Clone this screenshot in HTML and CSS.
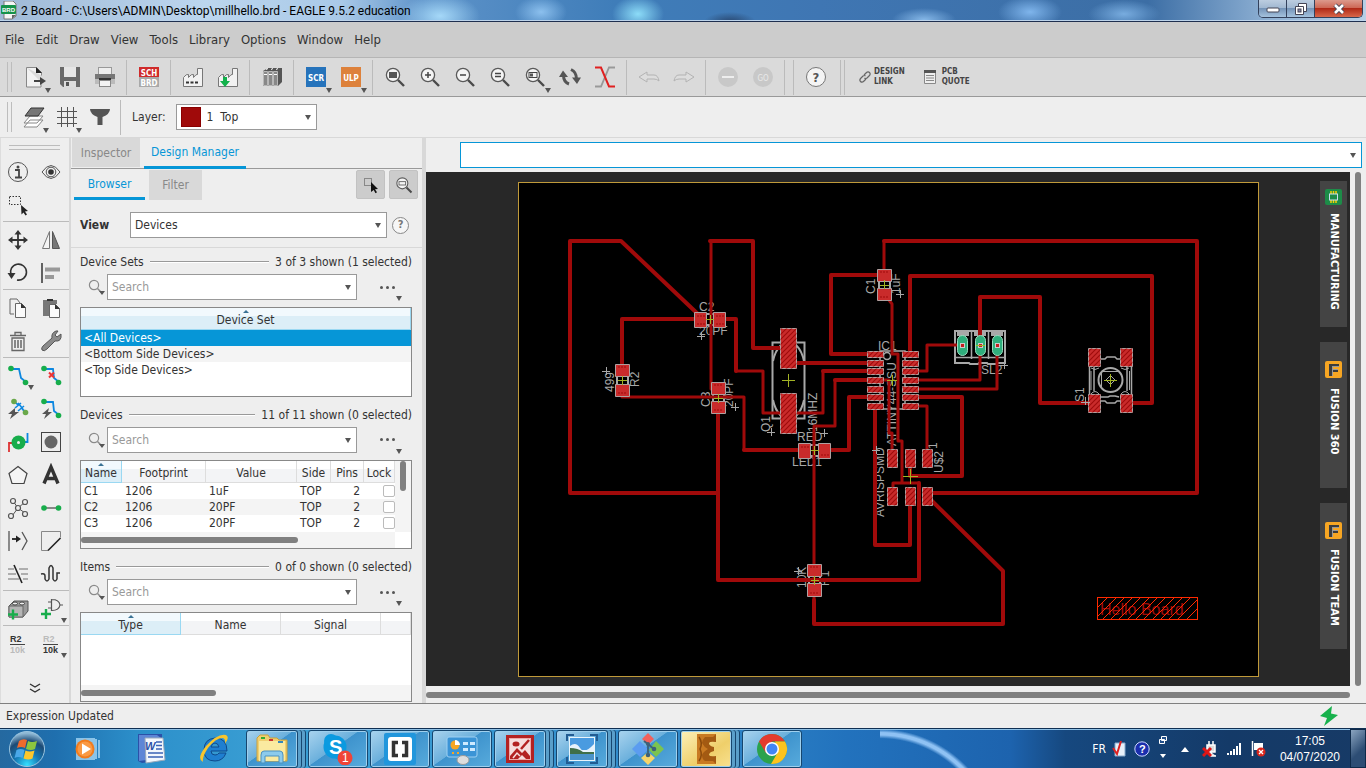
FILE: index.html
```html
<!DOCTYPE html>
<html lang="en">
<head>
<meta charset="utf-8">
<title>2 Board - EAGLE 9.5.2 education</title>
<link rel="stylesheet" href="styles.css">
</head>
<body>
<svg class="defs" aria-hidden="true">
  <defs>
    <symbol id="lens" viewBox="0 0 24 24"><circle cx="10" cy="10" r="6.6" fill="#f4f4f4" stroke="#5a5a5a" stroke-width="1.3"/><path d="M15 15l6 6" stroke="#4a4a4a" stroke-width="2.4"/></symbol>
    <symbol id="find" viewBox="0 0 16 16"><circle cx="6" cy="6" r="4.6" fill="none" stroke="#8a8a8a" stroke-width="1.2"/><path d="M9.5 9.5l5 5" stroke="#8a8a8a" stroke-width="1.5"/></symbol>
    <symbol id="factory" viewBox="0 0 24 24"><path d="M2.500 21.500V12.500q3-4 5-3v3q3-4 5-3v3q3-4 4-3V3.500h5v18z" fill="#f2f2f2" stroke="#777"/></symbol>
    <symbol id="fusion" viewBox="0 0 17 17"><rect width="17" height="17" rx="2" fill="#f7a623"/><path d="M4 3h10v3H8v2h5v3H8v4H4z" fill="#3c3c3c"/><path d="M7 5h7v1H8v2h5v1H8v6H7z" fill="#999"/></symbol>
  </defs>
</svg>

<div class="window">
<header class="titlebar">
  <svg class="app-icon" width="16" height="19" viewBox="0 0 16 19"><path d="M3 0h9l3 3v12l-4 3H3z" fill="#f4f4f4" stroke="#777"/><path d="M11 18v-4h4z" fill="#666"/><rect x="0" y="4" width="15" height="9" rx="1" fill="#16924a"/><text x="1" y="11" class="brd-mini">BRD</text></svg>
  <h1>2 Board - C:\Users\ADMIN\Desktop\millhello.brd - EAGLE 9.5.2 education</h1>
  <div class="winbtns">
    <button class="wb" aria-label="Minimize"><svg width="14" height="8" viewBox="0 0 14 8"><rect x="1" y="3" width="12" height="4" rx="1" fill="#fff" stroke="#445"/></svg></button>
    <button class="wb" aria-label="Restore"><svg width="14" height="14" viewBox="0 0 14 14"><path d="M4.500 1.500h8v8h-8z" fill="#fff" stroke="#445"/><path d="M1.500 4.500h8v8h-8z" fill="#fff" stroke="#445"/><rect x="4" y="7" width="3" height="3" fill="#88a" stroke="#445"/></svg></button>
    <button class="wb close" aria-label="Close"><svg width="14" height="12" viewBox="0 0 14 12"><path d="M3 2l8 8M11 2l-8 8" stroke="#445" stroke-width="4.500"/><path d="M3 2l8 8M11 2l-8 8" stroke="#fff" stroke-width="2.600"/></svg></button>
  </div>
</header>

<nav class="menubar">
  <button>File</button><button>Edit</button><button>Draw</button><button>View</button><button>Tools</button><button>Library</button><button>Options</button><button>Window</button><button>Help</button>
</nav>

<div class="toolbar main-tools">
  <span class="grip"></span>
  <button class="tool dd" aria-label="Open"><svg viewBox="0 0 24 24"><path d="M3.500 2.500h10l5 5v3M18 17v5H3.500V2.500" fill="#f2f2f2" stroke="#888"/><path d="M13 2l6 6h-6z" fill="#222"/><path d="M11 16h7" stroke="#444" stroke-width="2"/><path d="M17 12l6 4-6 4z" fill="#444"/></svg></button>
  <button class="tool" aria-label="Save"><svg viewBox="0 0 24 24"><path d="M2 2h20v20H5l-3-3z" fill="#696969"/><rect x="6" y="2" width="12" height="10" fill="#e6e6e6"/><rect x="6" y="16" width="12" height="6" fill="#ddd"/><rect x="8" y="17" width="3" height="4" fill="#555"/></svg></button>
  <button class="tool" aria-label="Print"><svg viewBox="0 0 24 24"><rect x="5.500" y="2.500" width="13" height="7" fill="#eee" stroke="#999"/><rect x="2" y="9" width="20" height="5" fill="#777"/><rect x="2" y="14" width="20" height="5" fill="#bbb"/><rect x="6" y="13" width="12" height="2" fill="#333"/><rect x="6.500" y="15.500" width="11" height="6" fill="#f2f2f2" stroke="#888"/></svg></button>
  <span class="sep"></span>
  <button class="tool" aria-label="Schematic"><svg viewBox="0 0 24 24"><rect x="2" y="2" width="20" height="10" fill="#cf2a2a"/><rect x="2" y="12" width="20" height="10" fill="#a9a9a9"/><text x="12" y="10.500" class="tag">SCH</text><text x="12" y="20.500" class="tag">BRD</text></svg></button>
  <span class="sep"></span>
  <button class="tool" aria-label="Manufacturing"><svg viewBox="0 0 24 24"><use href="#factory"/><path d="M5 17.500h12" stroke="#333" stroke-width="2" stroke-dasharray="3 1.500"/></svg></button>
  <button class="tool" aria-label="Generate CAM data"><svg viewBox="0 0 24 24"><use href="#factory"/><path d="M7 12h4v4h3l-5 6-5-6h3z" fill="#12b14b"/></svg></button>
  <span class="sep"></span>
  <button class="tool" aria-label="Library manager"><svg viewBox="0 0 24 24"><path d="M3 6l5-3h14v14l-4 4H3z" fill="#555"/><path d="M3.500 6.500h4v14h-4zM8.500 6.500h4v14h-4zM13.500 6.500h4v14h-4z" fill="#888" stroke="#ccc" stroke-width=".8"/><path d="M4 9.500h3M9 9.500h3M14 9.500h3M6 4.500l2-1M11 4.500l2-1M16 4.500l2-1" stroke="#fff"/></svg></button>
  <span class="sep"></span>
  <button class="tool dd" aria-label="Run script"><svg viewBox="0 0 24 24"><rect x="2" y="2" width="20" height="20" fill="#2673bb"/><text x="12" y="15.500" class="tag">SCR</text></svg></button>
  <button class="tool dd" aria-label="Run ULP"><svg viewBox="0 0 24 24"><rect x="2" y="2" width="20" height="20" fill="#dd813b"/><text x="12" y="15.500" class="tag">ULP</text></svg></button>
  <span class="sep"></span>
  <button class="tool" aria-label="Zoom to fit"><svg viewBox="0 0 24 24"><use href="#lens"/><rect x="6" y="7" width="8" height="6" fill="#555"/></svg></button>
  <button class="tool" aria-label="Zoom in"><svg viewBox="0 0 24 24"><use href="#lens"/><path d="M7 10h6M10 7v6" stroke="#444" stroke-width="1.500"/></svg></button>
  <button class="tool" aria-label="Zoom out"><svg viewBox="0 0 24 24"><use href="#lens"/><path d="M7 10h6" stroke="#444" stroke-width="1.500"/></svg></button>
  <button class="tool" aria-label="Redraw"><svg viewBox="0 0 24 24"><use href="#lens"/><path d="M7 8.500h6M7 11.500h6" stroke="#444" stroke-width="1.300"/></svg></button>
  <button class="tool dd" aria-label="Zoom select"><svg viewBox="0 0 24 24"><use href="#lens"/><rect x="6" y="7.500" width="8" height="5" fill="none" stroke="#444"/><rect x="7" y="8.500" width="3" height="3" fill="#555"/></svg></button>
  <button class="tool" aria-label="Refresh"><svg viewBox="0 0 24 24"><path d="M5.500 10q0 7 5.500 9M18.500 14q0-7-5.500-9.500" fill="none" stroke="#555" stroke-width="3"/><path d="M1 12l4-6.500 5 6.500zM14 12.500h9l-4 6.500z" fill="#555"/></svg></button>
  <button class="tool" aria-label="Stop routing"><svg viewBox="0 0 24 24"><path d="M2 21.500h6l8-19h6" fill="none" stroke="#999" stroke-width="1.800"/><path d="M2 2.500h6l8 19h6" fill="none" stroke="#e02020" stroke-width="2"/></svg></button>
  <span class="sep"></span>
  <button class="tool" aria-label="Undo" disabled><svg viewBox="0 0 24 24"><path d="M2 12l8-5v3h7q4 0 5 6-2-2-5-2h-7v3z" fill="#ddd" stroke="#b3b3b3"/></svg></button>
  <button class="tool" aria-label="Redo" disabled><svg viewBox="0 0 24 24"><path d="M22 12l-8-5v3H7q-4 0-5 6 2-2 5-2h7v3z" fill="#ddd" stroke="#b3b3b3"/></svg></button>
  <span class="sep"></span>
  <button class="tool" aria-label="Stop" disabled><svg viewBox="0 0 24 24"><circle cx="12" cy="12" r="10" fill="#c8c8c8"/><path d="M6 12h12" stroke="#eee" stroke-width="2"/></svg></button>
  <button class="tool" aria-label="Go" disabled><svg viewBox="0 0 24 24"><circle cx="12" cy="12" r="10" fill="#c8c8c8"/><text x="12" y="15.500" class="tag dim">GO</text></svg></button>
  <span class="sep"></span><span class="sep"></span>
  <button class="tool" aria-label="Help"><svg viewBox="0 0 24 24"><circle cx="12" cy="12" r="9.500" fill="#f4f4f4" stroke="#777"/><text x="8.500" y="17" class="qm">?</text></svg></button>
  <span class="sep double"></span>
  <button class="link-tool"><svg width="12" height="14" viewBox="0 0 12 14"><path d="M5 5L7 3Q9 1 10.500 2.500T10 6L8 8Q6.500 9 5.500 8M7 9l-2 2q-2 2-3.500.500T2 8l2-2q1.500-1 2.500 0" fill="none" stroke="#666" stroke-width="1.200"/></svg><span>DESIGN<br>LINK</span></button>
  <button class="link-tool quote"><svg width="12" height="14" viewBox="0 0 12 14"><rect width="12" height="3" y="0" fill="#555"/><path d="M.5 3v10.500h11V3" fill="#eee" stroke="#888"/><path d="M2 5.500h8M2 8h8M2 10.500h8" stroke="#888"/></svg><span>PCB<br>QUOTE</span></button>
</div>

<div class="toolbar option-tools">
  <span class="grip"></span>
  <button class="tool dd" aria-label="Layers"><svg viewBox="0 0 24 24"><path d="M8 15h13l-6 7H2zM8 11h13l-6 7H2z" fill="#fff" stroke="#888"/><path d="M9 3h13l-6 8H3z" fill="#777" stroke="#333"/></svg></button>
  <button class="tool dd" aria-label="Grid"><svg viewBox="0 0 24 24"><path d="M6.500 2v20M12.500 2v20M18.500 2v20M2 6.500h20M2 12.500h20M2 18.500h20" stroke="#555"/></svg></button>
  <button class="tool" aria-label="Filter"><svg viewBox="0 0 24 24"><path d="M2 4h20q0 5-7.500 8v8h-5v-8Q2 9 2 4z" fill="#555"/></svg></button>
  <span class="sep"></span>
  <label for="layer">Layer:</label>
  <span class="combo layer"><i class="swatch"></i><select id="layer"><option>1&nbsp; Top</option></select></span>
</div>

<main class="work">
  <aside class="palette">
    <span class="hgrip"></span>
    <div class="pgrid">
      <button aria-label="Info"><svg viewBox="0 0 24 24"><circle cx="12" cy="12" r="9.500" fill="none" stroke="#555"/><path d="M9 10h4v7M9 17.500h7" fill="none" stroke="#444" stroke-width="1.800"/><circle cx="12" cy="7" r="1.500" fill="#444"/></svg></button>
      <button aria-label="Show"><svg viewBox="0 0 24 24"><path d="M3 12q9-13 18 0-9 13-18 0z" fill="none" stroke="#555"/><circle cx="12" cy="12" r="4.800" fill="none" stroke="#555"/><circle cx="12" cy="12" r="2.800" fill="#333"/></svg></button>
      <button aria-label="Group"><svg viewBox="0 0 24 24"><rect x="3.500" y="3.500" width="11" height="8" fill="none" stroke="#333" stroke-dasharray="1.500 1.500"/><path d="M15 12l7 6-3 .5 2 3-1.500 1-2-3-2 2z" fill="#222"/></svg></button>
    </div>
    <hr>
    <div class="pgrid">
      <button aria-label="Move"><svg viewBox="0 0 24 24"><path d="M5 12h14M12 5v14" stroke="#333" stroke-width="1.800"/><path d="M12 2l3.500 4.500h-7zM12 22l3.500-4.500h-7zM2 12l4.500-3.500v7zM22 12l-4.500-3.500v7z" fill="#333"/></svg></button>
      <button aria-label="Mirror"><svg viewBox="0 0 24 24"><path d="M10.500 3.500v17h-7z" fill="#f4f4f4" stroke="#777"/><path d="M13.500 3.500v17h7z" fill="#777" stroke="#555"/></svg></button>
      <button aria-label="Rotate"><svg viewBox="0 0 24 24"><path d="M5 14a8 8 0 1 1 6 5" fill="none" stroke="#333" stroke-width="1.600"/><path d="M1.500 12l8 0-4 6z" fill="#333"/></svg></button>
      <button aria-label="Align"><svg viewBox="0 0 24 24"><path d="M3 2v20" stroke="#333" stroke-width="1.500"/><path d="M6 8.500h15M6 16h9" stroke="#999" stroke-width="4"/></svg></button>
    </div>
    <hr>
    <div class="pgrid">
      <button aria-label="Copy"><svg viewBox="0 0 24 24"><path d="M4 3h7l3 4M4 3v15h4" fill="none" stroke="#666"/><path d="M9.500 7.500h6l4 4v10h-10z" fill="#fafafa" stroke="#666"/><path d="M15 7v5h5z" fill="#333"/></svg></button>
      <button aria-label="Paste"><svg viewBox="0 0 24 24"><path d="M4 4h14v4h-7v12H4z" fill="#777"/><path d="M8 3h6v2H8z" fill="#333"/><path d="M10.500 8.500h6l4 4v9h-10z" fill="#fafafa" stroke="#666"/><path d="M16 8v5h5z" fill="#333"/></svg></button>
      <button aria-label="Delete"><svg viewBox="0 0 24 24"><path d="M4 6.500h16M9 6V3.500h6V6M6 9v12.500h12V9z" fill="none" stroke="#666" stroke-width="1.300"/><path d="M9 11v8M12 11v8M15 11v8" stroke="#666" stroke-width="1.500"/></svg></button>
      <button aria-label="Change"><svg viewBox="0 0 24 24"><path d="M3 21q-1-2 1-4l9-8q-1-5 4-7l2 0-3 4 2 2 4-3q1 8-6 7l-8 8q-3 3-5 1z" fill="#8b8b8b" stroke="#555"/></svg></button>
    </div>
    <hr>
    <div class="pgrid">
      <button class="dd" aria-label="Route"><svg viewBox="0 0 24 24"><path d="M5 5h8l2 9 5 4" fill="none" stroke="#0c87e0" stroke-width="1.800"/><circle cx="5" cy="4.500" r="2.800" fill="#17ad4b"/><circle cx="19.500" cy="18.500" r="2.800" fill="#17ad4b"/></svg></button>
      <button aria-label="Ripup"><svg viewBox="0 0 24 24"><path d="M5 5h9l1 9 5 4" fill="none" stroke="#0c87e0" stroke-width="1.800"/><circle cx="5" cy="4.500" r="2.800" fill="#17ad4b"/><circle cx="19.500" cy="18.500" r="2.800" fill="#17ad4b"/><path d="M10 8.500l5 5M15 8.500l-5 5" stroke="#e33" stroke-width="2"/></svg></button>
      <button aria-label="Autoroute pair"><svg viewBox="0 0 24 24"><path d="M8 4l4 4M16 12l4 3M9 11l6-5M12 14l6-5M12 6l5 6" stroke="#0c87e0" stroke-width="1.600"/><circle cx="8" cy="4.500" r="2.800" fill="#6aa84a"/><circle cx="19.500" cy="15.500" r="2.800" fill="#6aa84a"/><path d="M9 11l-7 6h4l-2 5 9-7H9z" fill="#555"/></svg></button>
      <button aria-label="Autoroute"><svg viewBox="0 0 24 24"><path d="M5 5h9l1 9 5 4" fill="none" stroke="#0c87e0" stroke-width="1.800"/><circle cx="5" cy="4.500" r="2.800" fill="#17ad4b"/><circle cx="19.500" cy="18.500" r="2.800" fill="#17ad4b"/><path d="M10 11l-7 6h4l-2 5 8-7H9z" fill="#555"/></svg></button>
      <button aria-label="Via"><svg viewBox="0 0 24 24"><path d="M3 22v-9h5" fill="none" stroke="#d33" stroke-width="1.800"/><path d="M21.500 3v9H16" fill="none" stroke="#0c87e0" stroke-width="1.800"/><circle cx="12.500" cy="12.500" r="7" fill="#17ad4b"/><circle cx="12.500" cy="12.500" r="1.500" fill="#eee"/></svg></button>
      <button aria-label="Hole"><svg viewBox="0 0 24 24"><rect x="2.500" y="2.500" width="19" height="19" fill="none" stroke="#444"/><circle cx="12" cy="12" r="6.500" fill="#666"/></svg></button>
      <button aria-label="Polygon"><svg viewBox="0 0 24 24"><path d="M12 3.500l9 7-3 10H6l-3-10z" fill="#f4f4f4" stroke="#444" stroke-width="1.200"/></svg></button>
      <button aria-label="Text"><svg viewBox="0 0 24 24"><path d="M5 20.500L12 4l7 16.500M7.500 15.500h9" fill="none" stroke="#333" stroke-width="3.400"/></svg></button>
      <button aria-label="Ratsnest"><svg viewBox="0 0 24 24"><path d="M7 5l5 7 7-6M12 12l-6 8M12 12l7 5" fill="none" stroke="#555"/><g fill="#eee" stroke="#555" stroke-width="1.200"><circle cx="7" cy="5" r="2.500"/><circle cx="19" cy="6" r="2.500"/><circle cx="5" cy="20" r="2.500"/><circle cx="19" cy="18" r="2.500"/><circle cx="12" cy="12" r="2.500"/></g></svg></button>
      <button aria-label="Signal"><svg viewBox="0 0 24 24"><path d="M5 12h14" stroke="#888" stroke-width="2"/><circle cx="5" cy="12" r="2.800" fill="#17ad4b"/><circle cx="19.500" cy="12" r="2.800" fill="#17ad4b"/></svg></button>
      <button aria-label="Slice"><svg viewBox="0 0 24 24"><path d="M3 2v20M16 3l5 9-5 9" fill="none" stroke="#555" stroke-width="1.300"/><path d="M6 10h5" stroke="#222" stroke-width="1.800"/><path d="M10 6.500l5 3.500-5 3.500z" fill="#222"/></svg></button>
      <button aria-label="Miter"><svg viewBox="0 0 24 24"><path d="M2.500 21.500v-19h19v6M9 21.500H2.500" fill="none" stroke="#888"/><path d="M9 21.500L21.500 9" stroke="#222" stroke-width="1.600"/></svg></button>
      <button aria-label="Split"><svg viewBox="0 0 24 24"><path d="M2 7h6M13 7h9M2 12h8M15 12h7M2 17h11M17 17h5" fill="none" stroke="#999" stroke-width="1.400"/><path d="M8 3l8 18" stroke="#222" stroke-width="1.600"/></svg></button>
      <button aria-label="Meander"><svg viewBox="0 0 24 24"><path d="M2 12q4-1 4 2v3q2 4 4 0V6q2-5 4 0v11q2 4 4 0v-6h3" fill="none" stroke="#333" stroke-width="1.500"/></svg></button>
    </div>
    <hr>
    <div class="pgrid">
      <button aria-label="Add part"><svg viewBox="0 0 24 24"><path d="M3 9l5-5h14v10l-5 6H3z" fill="#999" stroke="#555"/><path d="M3 9h14v11H3z" fill="#b5b5b5" stroke="#666"/><g fill="#eee" stroke="#444"><ellipse cx="9" cy="6.500" rx="2.500" ry="1.500"/><ellipse cx="16" cy="6.500" rx="2.500" ry="1.500"/></g><path d="M2 17.500h10M7 12.500v10" stroke="#17ad4b" stroke-width="2.400"/></svg></button>
      <button class="dd" aria-label="Replace"><svg viewBox="0 0 24 24"><path d="M12.500 2v12M13 2.500q7 0 8 5.500-1 5.500-8 5.500M9 5h4M9 11h4M21 8h3" fill="none" stroke="#555" stroke-width="1.200"/><path d="M2 17h10M7 12v10" stroke="#17ad4b" stroke-width="2.400"/></svg></button>
    </div>
    <hr>
    <div class="pgrid">
      <button aria-label="Name"><svg viewBox="0 0 24 24"><text x="4" y="10" class="rv">R2</text><path d="M4 12.500h15" stroke="#444"/><text x="4" y="21" class="rv dim2">10k</text></svg></button>
      <button class="dd" aria-label="Value"><svg viewBox="0 0 24 24"><text x="4" y="10" class="rv dim2">R2</text><path d="M4 12.500h15" stroke="#444"/><text x="4" y="21" class="rv">10k</text></svg></button>
    </div>
    <button class="more" aria-label="More"><svg width="12" height="12" viewBox="0 0 12 12"><path d="M1 2l5 3 5-3M1 7l5 3 5-3" fill="none" stroke="#333" stroke-width="1.400"/></svg></button>
  </aside>

  <section class="panel">
    <div class="tabs"><button class="tab">Inspector</button><button class="tab on">Design Manager</button></div>
    <div class="subtabs">
      <button class="tab on">Browser</button><button class="tab">Filter</button>
      <span class="grow"></span>
      <button class="sq" aria-label="Select in board"><svg width="20" height="20" viewBox="0 0 20 20"><rect x="3.500" y="3.500" width="7" height="7" fill="#ccc" stroke="#888"/><path d="M10 7l7 7-3 .3 2 3-1.500 1-1.800-3.300-2.700 2z" fill="#111"/></svg></button>
      <button class="sq" aria-label="Zoom to selection"><svg width="20" height="20" viewBox="0 0 24 24"><use href="#lens"/><rect x="6" y="8" width="8" height="4" fill="none" stroke="#555"/></svg></button>
    </div>
    <div class="viewrow">
      <label for="view">View</label>
      <span class="combo"><select id="view"><option>Devices</option></select></span>
      <button class="help" aria-label="View help">?</button>
    </div>

    <div class="groups">
      <section class="group">
        <div class="ghead"><h2>Device Sets</h2><span class="rule"></span><span>3 of 3 shown (1 selected)</span></div>
        <div class="search"><button class="dd" aria-label="Search options"><svg width="16" height="16"><use href="#find"/></svg></button><span class="combo"><input aria-label="Search device sets" placeholder="Search"></span><button class="dots dd" aria-label="More options"><i></i><i></i><i></i></button></div>
        <div class="box">
          <table class="list sets"><thead><tr><th class="sorted">Device Set</th></tr></thead>
          <tbody><tr class="sel"><td>&lt;All Devices&gt;</td></tr><tr><td>&lt;Bottom Side Devices&gt;</td></tr><tr><td>&lt;Top Side Devices&gt;</td></tr></tbody></table>
        </div>
      </section>
      <section class="group">
        <div class="ghead"><h2>Devices</h2><span class="rule"></span><span>11 of 11 shown (0 selected)</span></div>
        <div class="search"><button class="dd" aria-label="Search options"><svg width="16" height="16"><use href="#find"/></svg></button><span class="combo"><input aria-label="Search devices" placeholder="Search"></span><button class="dots dd" aria-label="More options"><i></i><i></i><i></i></button></div>
        <div class="box">
          <div class="scrollrow">
            <table class="list devs">
              <colgroup><col class="c41"><col class="c84"><col class="c90"><col class="c34"><col class="c33"><col></colgroup>
              <thead><tr><th class="sorted">Name</th><th>Footprint</th><th>Value</th><th>Side</th><th>Pins</th><th>Lock</th></tr></thead>
              <tbody>
                <tr><td>C1</td><td>1206</td><td>1uF</td><td>TOP</td><td class="num">2</td><td class="num"><input type="checkbox" aria-label="Lock C1"></td></tr>
                <tr><td>C2</td><td>1206</td><td>20PF</td><td>TOP</td><td class="num">2</td><td class="num"><input type="checkbox" aria-label="Lock C2"></td></tr>
                <tr><td>C3</td><td>1206</td><td>20PF</td><td>TOP</td><td class="num">2</td><td class="num"><input type="checkbox" aria-label="Lock C3"></td></tr>
              </tbody></table>
            <div class="vbar"><i></i></div>
          </div>
          <div class="hbar wide"><i></i></div>
        </div>
      </section>
      <section class="group">
        <div class="ghead"><h2>Items</h2><span class="rule"></span><span>0 of 0 shown (0 selected)</span></div>
        <div class="search"><button class="dd" aria-label="Search options"><svg width="16" height="16"><use href="#find"/></svg></button><span class="combo"><input aria-label="Search items" placeholder="Search"></span><button class="dots dd" aria-label="More options"><i></i><i></i><i></i></button></div>
        <div class="box">
          <div class="scrollrow">
          <table class="list items"><colgroup><col class="c100"><col class="c100"><col class="c100"><col></colgroup><thead><tr><th class="sorted">Type</th><th>Name</th><th>Signal</th><th></th></tr></thead></table>
          </div>
          <div class="hbar"><i></i></div>
        </div>
      </section>
    </div>
  </section>

  <section class="editor">
    <div class="cmd"><span class="combo"><input aria-label="Command line"></span></div>
    <div class="stage">
      <div class="canvas">
        <svg class="board" viewBox="426 172 924 514" preserveAspectRatio="xMidYMid meet">
          <defs>
            <pattern id="hatch" width="5" height="5" patternUnits="userSpaceOnUse"><path d="M-1 6L6 -1M-1 1L1 -1M4 6L6 4" stroke="#9f0a0a" stroke-width="1.200"/></pattern>
          </defs>
          <rect x="518.500" y="182.500" width="740" height="494" fill="#000" stroke="#c09a3a"/>
          <g class="silk">
            <text x="699" y="311">C2</text><text x="699" y="335">20PF</text>
            <text transform="translate(614 392) rotate(-90)">499</text><text transform="translate(639 387) rotate(-90)">R2</text>
            <text transform="translate(710 407) rotate(-90)">C3</text><text transform="translate(733 407) rotate(-90)">20PF</text>
            <text transform="translate(875 294) rotate(-90)">C1</text><text transform="translate(900 294) rotate(-90)">1uF</text>
            <text transform="translate(770 432) rotate(-90)">Q1</text><text transform="translate(817 432) rotate(-90)">16MHZ</text>
            <text x="797" y="441">RED</text><text x="792" y="466">LED1</text>
            <text x="878" y="350">IC1</text><text transform="translate(896 446) rotate(-90)">ATTINY44-SSU</text>
            <text transform="translate(884 517) rotate(-90)">AVRISPSMD</text><text transform="translate(943 473) rotate(-90)">U$2</text><text transform="translate(937 449) rotate(-90)">1</text>
            <text x="981" y="374">SL2</text><text transform="translate(1084 402) rotate(-90)">S1</text>
            <text transform="translate(806 588) rotate(-90)">10K</text><text transform="translate(829 586) rotate(-90)">R1</text>
          </g>
          <!-- package outlines -->
          <g fill="none" stroke="#a8a8a8" stroke-width="2">
            <rect x="772.500" y="342.500" width="32" height="76"/>
            <path d="M773 361q2-10 8-16M804 361q-2-10-8-16M773 400q2 10 8 16M804 400q-2 10-8 16"/>
            <rect x="880" y="351" width="25" height="58" stroke-width="1.500"/>
            <circle cx="887" cy="356" r="3.500" stroke-width="1.500"/>
            <path d="M955 331h50v32h-8l-1 1h-8l-1-1h-8l-1 1h-8l-1-1h-14z"/>
            <path d="M956 357.500h48M971.500 331v28M988.500 331v28" stroke-width="1.500"/>
            <path d="M957 334h12M974 334h12M991 334h12" stroke-width="4"/>
            <path d="M1089.500 366v30M1131.500 366v30M1094 367v24M1127 367v24M1100 359h5l2-2h8l2 2h4M1100 397h8l2-1h5l4 1M1100 401h5l2 2h8l2-2h4" stroke-width="1.500"/>
            <path d="M1091 371v19M1129.500 371v19M1091 368q4 3 8 0M1121 368q4 3 8 0M1091 394q4-5 8 0M1121 394q4-5 8 0" stroke-width="1"/>
            <circle cx="1110.500" cy="380" r="12"/>
            <path d="M1101 371.500h19M1101.500 372v16M1106 380l4.500-4.500 4.500 4.500-4.500 4.500z" stroke-width="1"/>
            <path d="M617 377v7M628 377v7M713 395v6M724 395v6M707 314h6M707 325h6M879 282v6M890 282v6M811 445h7M811 456h7M809 577v6M820 577v6"/>
          </g>
          <!-- copper traces -->
          <g class="trace">
            <path d="M700 316L621 241H570V493H718M700 319H622V368M710 241H753V348H785M722 319H736V371M718 412V580H919V483M824 450H849V397H870M884 241H1197V493H930M878 275H831V354H870M910 354V276H1152V403H1127M980 345V297H1040V403H1093M918 397H962V476H910V460M875 409V545H910V497M800 450H744M814 600V624H1003V571L928 497M797 363H870M823 371H870M835 380H870"/>
          </g>
          <g class="trace thin">
            <path d="M711 389V241M736 371H763V413M622 397H744V450M763 413H823V371M835 380V426H814V600M884 270V241M889 300L892 304V354H898V441H902V483M918 371H927V345H962M918 380H980V345M918 389H997V345M918 406H927V460M870 380H889V433H892V455M893 490V483H919"/>
          </g>
          <g class="pads">
            <g id="p">
              <path d="M694.500 312.500h12v15h-12zM713.500 312.500h12v15h-12zM615.500 364.500h14v12h-14zM615.500 384.500h14v12h-14zM711.500 382.500h14v12h-14zM711.500 401.500h14v12h-14zM877.500 269.500h14v12h-14zM877.500 288.500h14v12h-14zM798.500 443.500h12v15h-12zM818.500 443.500h12v15h-12zM807.500 564.500h14v12h-14zM807.500 583.500h14v13h-14z"/>
            </g>
            <g id="q">
              <path d="M780.500 328.500h16v40h-16zM780.500 393.500h16v40h-16zM1088.500 348.500h12v18h-12zM1120.500 348.500h12v18h-12zM1088.500 394.500h12v18h-12zM1120.500 394.500h12v18h-12zM887.500 449.500h10v18h-10zM905.500 449.500h10v18h-10zM922.500 449.500h10v18h-10zM887.500 487.500h10v18h-10zM905.500 487.500h10v18h-10zM922.500 487.500h10v18h-10z"/>
              <path d="M867.500 351.500h16v6h-16zM867.500 360.500h16v6h-16zM867.500 368.500h16v6h-16zM867.500 377.500h16v6h-16zM867.500 386.500h16v6h-16zM867.500 394.500h16v6h-16zM867.500 403.500h16v6h-16zM902.500 351.500h16v6h-16zM902.500 360.500h16v6h-16zM902.500 368.500h16v6h-16zM902.500 377.500h16v6h-16zM902.500 386.500h16v6h-16zM902.500 394.500h16v6h-16zM902.500 403.500h16v6h-16z"/>
            </g>
          </g>
          <use href="#q" class="pad-hatch"/>
          <path d="M697 316h8M697 324h8M716 316h8M716 324h8M618 367h9M618 393h9M714 385h9M714 410h9M880 272h9M880 297h9M801 447h8M821 455h8M810 567h9M810 593h9" stroke="#9f0a0a" stroke-dasharray="2 1"/>
          <g fill="#2fae7c" stroke="#9adcc0"><rect x="957.500" y="335.500" width="10" height="20" rx="5"/><rect x="975.500" y="335.500" width="10" height="20" rx="5"/><rect x="992.500" y="335.500" width="10" height="20" rx="5"/></g>
          <g fill="#c41d1d" stroke="#ccc"><rect x="960.500" y="343.500" width="4" height="4"/><rect x="978.500" y="343.500" width="4" height="4"/><rect x="995.500" y="343.500" width="4" height="4"/></g>
          <!-- origin crosses -->
          <path d="M782 380.500h13M788.500 374v13M706 319.500h8M710.500 315v9M618 380.500h9M622.500 376v9M714 398.500h9M718.500 394v9M880 285.500h9M884.500 280v9M811 450.500h8M814.500 446v9M811 580.500h8M814.500 576v9M887 380.500h10M892.500 375v11M903 476.500h15M910.500 469v15M1104 380.500h13M1110.500 374v13M976 345.500h9" stroke="#a3b425" fill="none"/>
          <path d="M697 336.500h8M701.500 332v8M602 371.500h8M606.500 367v8M731 407.500h8M735.500 403v8M896 294.500h8M900.500 290v8M767 432.500h8M771.500 428v8M820 433.500h8M824.500 429v8M1000 365.500h8M1004.500 361v8M794 571.500h8M798.500 567v8M872 450.500h8M876.500 446v8M1081 402.500h9M1085.500 397v8" stroke="#a8a8a8" fill="none"/>
          <text x="1100" y="615" class="hello">Hello Board</text>
          <g fill="none" stroke="#ff2a00">
            <rect x="1097.500" y="597.500" width="100" height="22"/>
            <path d="M1098 607l9-9M1098 616l18-18M1103 619l21-21M1111 619l21-21M1119 619l21-21M1128 619l21-21M1136 619l21-21M1144 619l21-21M1153 619l21-21M1161 619l21-21M1169 619l21-21M1178 619l19-19M1187 619l10-10"/>
          </g>
        </svg>
        <nav class="sidetabs">
          <button><svg width="17" height="17" viewBox="0 0 17 17"><rect width="17" height="16" rx="2" fill="#1d8c48"/><path d="M6 2v12M8.500 2v12M11 2v12" stroke="#f5d000" stroke-width="1.500"/><rect x="4.500" y="5" width="8" height="6" fill="#1d8c48" stroke="#cde"/></svg><span>MANUFACTURING</span></button>
          <button><svg width="17" height="17"><use href="#fusion"/></svg><span>FUSION 360</span></button>
          <button><svg width="17" height="17"><use href="#fusion"/></svg><span>FUSION TEAM</span></button>
        </nav>
      </div>
      <div class="cscroll-v"><i></i></div>
      <div class="cscroll-h"><i></i></div>
    </div>
  </section>
</main>

<footer class="status"><span>Expression Updated</span><svg width="22" height="20" viewBox="0 0 22 20"><path d="M14 0L2 10l7 2-3 8L20 9l-7-1.500z" fill="#17b14c"/></svg></footer>
</div>

<nav class="taskbar">
  <button class="orb" aria-label="Start"><svg width="38" height="38" viewBox="0 0 38 38"><defs><radialGradient id="og" cx=".5" cy=".95" r=".9"><stop offset="0" stop-color="#35e0ff"/><stop offset=".4" stop-color="#1479b5"/><stop offset=".75" stop-color="#1c4a75"/><stop offset="1" stop-color="#8fb9d5"/></radialGradient></defs><circle cx="19" cy="19" r="17.500" fill="url(#og)" stroke="#9cc6e0"/><path d="M11 11q4-3 8-1l-2 8q-4-2-8 0z" fill="#ef6a2d"/><path d="M20 11q4 2 9 0l-2 8q-4 2-9 0z" fill="#8cc63f"/><path d="M8.500 20q4-2 8 0l-2 8q-4-2-8 0z" fill="#4aa8e8"/><path d="M17.500 20.500q4 2 9 0l-2 8q-4 2-9 0z" fill="#fcc72c"/></svg></button>
  <button class="pin" aria-label="Media Player"><svg width="28" height="28" viewBox="0 0 28 28"><path d="M2 3h19v22H2zM21 4h2v20h-2zM24 5h2v18h-2z" fill="#9ed0f0" opacity=".85"/><circle cx="11" cy="14" r="9.500" fill="#f17c1d"/><circle cx="11" cy="14" r="7.500" fill="#fa9a44"/><path d="M8 8.500l9 5.500-9 5.500z" fill="#fff"/></svg></button>
  <button class="pin" aria-label="Word"><svg width="32" height="32" viewBox="0 0 32 32"><path d="M3 1h24v26l-20 3-4-2z" fill="#2b51a8"/><path d="M4 2h18l4 3v20l-22 3z" fill="#5e86d6"/><path d="M10 5h18l2 22-19 3z" fill="#f3f7fd" stroke="#9ab"/><path d="M21 9h6M21 12.500h6M21 16h6M13 20h15M13 24h15" stroke="#3b63b5" stroke-width="1.500"/><text x="10" y="17" class="wordw">W</text></svg></button>
  <button class="pin" aria-label="Internet Explorer"><svg width="32" height="32" viewBox="0 0 32 32"><path d="M28 20q-3 8-11 8-11 0-11-11T17 5q12 0 12 13H13q0 4 4 4 3 0 4-2zM13 14h8q-1-4-4-4t-4 4z" fill="#1f7fd0" stroke="#0f4a8c"/><path d="M5 29Q-2 26 8 13 20 0 28 2q4 2-1 9 1-6-3-6-6 0-14 10-6 9-5 14z" fill="#f8c52e"/></svg></button>
  <button class="app stack"><svg width="32" height="32" viewBox="0 0 32 32" aria-label="Explorer"><path d="M1 5l3-3h8l2 3h7l2 2h8v21H1z" fill="#f0d070" stroke="#c9a03c"/><path d="M3 8h26v20H3z" fill="#faeaa0"/><path d="M5 4h4v2H5z" fill="#3a3"/><path d="M13 6h4v2h-4z" fill="#c33"/><path d="M22 8h5v2h-5z" fill="#38b"/><path d="M5 30v-8q0-4 3-4h16q3 0 3 4v8h-4v-7H9v7z" fill="#8ccbec" stroke="#4a91c0"/></svg></button>
  <button class="app"><svg width="32" height="32" viewBox="0 0 32 32" aria-label="Skype"><circle cx="13" cy="14" r="11.500" fill="#0b9ae0"/><circle cx="9" cy="8" r="7" fill="#0b9ae0"/><circle cx="18" cy="20" r="7" fill="#0b9ae0"/><text x="7" y="21" class="sk">S</text><circle cx="23" cy="25" r="7.500" fill="#f04438"/><text x="20" y="29" class="skn">1</text></svg></button>
  <button class="app"><svg width="32" height="32" viewBox="0 0 32 32" aria-label="Brackets"><rect width="32" height="32" rx="2" fill="#2196dc"/><rect x="4" y="4" width="24" height="24" rx="3" fill="#fff"/><path d="M14 9.500H9.500v13H14M18 9.500h4.500v13H18" fill="none" stroke="#333" stroke-width="3.500"/></svg></button>
  <button class="app"><svg width="32" height="32" viewBox="0 0 32 32" aria-label="Control Panel"><rect x="1" y="4" width="30" height="20" rx="2" fill="#3b94d6" stroke="#9fd0f2"/><circle cx="9" cy="12" r="4.500" fill="#f6a623"/><path d="M9 12V7a5 5 0 0 1 5 5z" fill="#fff"/><path d="M6 20h2M11 20h2" stroke="#f6a623" stroke-width="2"/><path d="M17 10.500h5M24 10.500h5M17 16.500h5M24 16.500h5" stroke="#cfeaff" stroke-width="3"/><ellipse cx="17" cy="27" rx="6" ry="4.500" fill="#ddd" stroke="#999"/></svg></button>
  <button class="app stack"><svg width="30" height="30" viewBox="0 0 30 30" aria-label="Image tool"><rect x="1" y="1" width="28" height="28" fill="#b32222"/><rect x="4.500" y="4.500" width="21" height="21" fill="#f6dede" stroke="#eaa"/><path d="M16 15L24 6" stroke="#b32222" stroke-width="2.500"/><ellipse cx="11" cy="10" rx="3.500" ry="2.500" fill="#b32222"/><path d="M5 22l7-8 5 5 3-3 5 6v3h-4l-4-4-4 4H5z" fill="#b32222"/><path d="M8 24l4-5 3 3" fill="none" stroke="#f6dede" stroke-width="1.500"/></svg></button>
  <button class="app stack"><svg width="32" height="30" viewBox="0 0 32 30" aria-label="Photo Viewer"><rect x="3" y="3" width="26" height="24" fill="#e9f4fb"/><rect x="4" y="4" width="24" height="12" fill="#4a9be0"/><path d="M4 12q6-5 10 2t14-4v7H4z" fill="#e6f2fb"/><path d="M4 14q8 0 13 4h11v3H4z" fill="#3f6f48"/><rect x="4" y="20" width="24" height="6" fill="#4a93c9"/><path d="M1 7V1h7M24 1h7v6M31 23v6h-7M8 29H1v-6" fill="none" stroke="#225c93" stroke-width="2"/></svg></button>
  <button class="app"><svg width="32" height="32" viewBox="0 0 32 32" aria-label="Git"><path d="M16 0l6 6-6 6-6-6z" fill="#f2615c"/><path d="M8 8l7 7v3l-7 6-8-8z" fill="#5b9cf0"/><path d="M24 8l8 8-8 8-7-7z" fill="#7bc350"/><path d="M16 19l7 6-7 7-7-7z" fill="#f5d46b"/><path d="M12 8l10 8M16 11v11" stroke="#3d6079" stroke-width="1.800"/><circle cx="22" cy="16" r="2.300" fill="#3d6079"/><circle cx="16" cy="22" r="2.300" fill="#3d6079"/><circle cx="16" cy="11" r="2" fill="#3d6079"/></svg></button>
  <button class="app stack active"><svg width="26" height="34" viewBox="0 0 26 34" aria-label="EAGLE"><path d="M4 2h19v8q-6-1-7 1 0 3 5 4v4q-5 1-5 4 1 2 7 1v8H4z" fill="#a35a12"/><path d="M4 2h19l-3 3h-8q-3 3-3 6 2 4 6 6-5 3-6 6 0 4 3 6h8l3 3H4z" fill="#c97a22"/><path d="M6 5q4 6 1 12 3 6-1 12" fill="none" stroke="#8a4a0c" stroke-width="1.500"/></svg></button>
  <button class="app"><svg width="32" height="32" viewBox="0 0 32 32" aria-label="Chrome"><circle cx="16" cy="16" r="15" fill="#2ba24c"/><path d="M3 8.500A15 15 0 0 1 29 8.500H16L10 20z" fill="#e33b2e"/><path d="M29 8.500A15 15 0 0 1 15 31l7-12-3-10.500z" fill="#fcc31e"/><circle cx="16" cy="16" r="7" fill="#fff"/><circle cx="16" cy="16" r="5.500" fill="#4286f5"/></svg></button>
  <span class="grow"></span>
  <div class="tray">
    <span class="lang">FR</span>
    <svg width="14" height="16" viewBox="0 0 14 16"><path d="M3 2h10v13H3z" fill="#e8f0fa" stroke="#8ac"/><path d="M1 7l4 6L9 0" fill="none" stroke="#d22" stroke-width="2"/></svg>
    <svg class="gap8" width="16" height="16" viewBox="0 0 16 16"><circle cx="8" cy="8" r="7.200" fill="#1b2fae" stroke="#cdd8ff"/><text x="5" y="12" class="tq">?</text></svg>
    <svg class="gap8" width="10" height="26" viewBox="0 0 10 26"><path d="M3.500.5h5v4h-5zM1.500 3.500h5v4h-5z" fill="#23508a" stroke="#fff"/><path d="M2 18h6l-3 4z" fill="#fff"/></svg>
    <svg class="gap12" width="10" height="10" viewBox="0 0 10 10"><path d="M1 8h8L5 3z" fill="#fff"/></svg>
    <svg class="gap12" width="16" height="18" viewBox="0 0 16 18"><path d="M5 5h8v7H5zM7 1v4M11 1v4M9 12v4h5" fill="#ddd" stroke="#fff" stroke-width="1.500"/><path d="M1 8l8 8M9 8l-8 8" stroke="#e01616" stroke-width="3"/></svg>
    <svg class="gap8" width="16" height="14" viewBox="0 0 16 14"><path d="M1 13v-2h2v2zM4 13V9h2v4zM7 13V7h2v6zM10 13V4h2v9zM13 13V1h2v12z" fill="#fff"/></svg>
    <svg class="gap8" width="16" height="18" viewBox="0 0 16 18"><path d="M2.500 1v15" stroke="#fff" stroke-width="1.500"/><path d="M4 3h9v7H4z" fill="#fff"/><circle cx="11" cy="12" r="4.500" fill="#d8261c"/><path d="M9 10l4 4M13 10l-4 4" stroke="#fff" stroke-width="1.300"/></svg>
    <div class="clock"><span>17:05</span><span>04/07/2020</span></div>
    <button class="peek" aria-label="Show desktop"></button>
  </div>
</nav>
</body>
</html>
```
FILE: styles.css
```css
* { box-sizing: border-box; }
body {
  margin: 0; height: 100vh; display: flex; flex-direction: column; overflow: hidden;
  font: 12px/16px "DejaVu Sans Condensed", "DejaVu Sans", sans-serif; color: #333; background: #eee;
}
button, input, select { font: inherit; color: inherit; }
button { border: 0; padding: 0; background: none; }
h1, h2 { margin: 0; font-size: inherit; font-weight: inherit; }
.defs { position: absolute; width: 0; height: 0; }
.grow { flex: 1; }
.window { flex: 1; min-height: 0; display: flex; flex-direction: column; }

/* title bar */
.titlebar {
  flex: none; height: 22px; display: flex; align-items: center; padding-left: 1px; gap: 4px; border-bottom: 1px solid #1f2f4f;
  box-shadow: inset 0 -1px #bcd3ea;
  background:
    radial-gradient(ellipse 40px 22px at 440px 16px, #a5d8f8, transparent),
    radial-gradient(ellipse 26px 16px at 541px 12px, #8cc0ee, transparent),
    radial-gradient(ellipse 26px 18px at 638px 14px, #8cdcf8, transparent),
    radial-gradient(ellipse 26px 10px at 730px 22px, #29476f, transparent),
    radial-gradient(ellipse 32px 12px at 924px 20px, #86b8e8, transparent),
    radial-gradient(ellipse 32px 16px at 1030px 12px, #7fb5ec, transparent),
    radial-gradient(ellipse 36px 14px at 1124px 14px, #78acdf, transparent),
    linear-gradient(90deg, #9fb9d6, #bcd6ee 15%, #a9c9e8 25%, #5e93c9 31%, #3f7db9 45%, #3f76b3 60%, #3c6ea5 84%, #8fb1d4 93%, #b7cfe6);
}
.titlebar h1 { flex: 1; font: 12px/20px Roboto, "Noto Sans", sans-serif; color: #000; white-space: nowrap; }
.app-icon { flex: none; }
.brd-mini { font: bold 6px "Liberation Sans", sans-serif; fill: #fff; }
.winbtns { display: flex; align-self: flex-start; margin-right: 3px; border: 1px solid #33415c; border-top: 0; border-radius: 0 0 5px 5px; overflow: hidden; }
.wb { width: 28px; height: 17px; display: grid; place-items: center; border-right: 1px solid #33415c; background: linear-gradient(#bccde0, #9fb6d0 50%, #7594b8 50%, #a5c2de); }
.wb.close { width: 47px; border-right: 0; background: linear-gradient(#dc9a8c, #cc6350 50%, #b02a17 50%, #d8674a); }

/* menu and tool bars */
.menubar { flex: none; height: 36px; display: flex; align-items: center; gap: 11px; padding-left: 5px; background: #ccc; border-bottom: 1px solid #b5b5b5; font-size: 13px; }
.toolbar { flex: none; display: flex; align-items: center; }
.main-tools { height: 39px; background: #dadada; border-bottom: 1px solid #999; }
.option-tools { height: 41px; border-bottom: 1px solid #d8d8d8; }
.grip { width: 5px; height: 30px; margin: 0 5px 0 7px; border: solid #bdbdbd; border-width: 0 1px; }
.tool { position: relative; flex: none; width: 35px; height: 34px; display: grid; place-items: center; }
.tool svg { width: 24px; height: 24px; }
.option-tools .tool { width: 33px; }
.sep { flex: none; width: 1px; height: 35px; margin: 0 4px; background: #bbb; }
.sep.double { width: 5px; margin: 0 14px 0 7px; background: none; border: solid #bbb; border-width: 0 1px; }
.dd { position: relative; }
.dd::after, .combo::after { content: ""; position: absolute; border: solid transparent; border-width: 5px 3px 0; border-top-color: #555; }
.dd::after { right: 1px; bottom: 1px; }
.tag { font: bold 8px "DejaVu Sans Condensed", sans-serif; fill: #fff; text-anchor: middle; }
.tag.dim { fill: #e8e8e8; font-weight: normal; }
.qm { font: bold 13px "DejaVu Sans Condensed", sans-serif; fill: #555; }
.link-tool { display: flex; align-items: center; gap: 3px; font: bold 8px/10px "DejaVu Sans Condensed", sans-serif; text-align: left; color: #444; }
.link-tool.quote { margin-left: 19px; gap: 6px; }
.option-tools label { margin: 0 10px 0 7px; }
.combo { position: relative; display: flex; height: 26px; background: #fff; border: 1px solid #999; }
.combo::after { right: 5px; top: 10px; pointer-events: none; }
.combo select, .combo input { flex: 1; width: 100%; min-width: 0; border: 0; outline: 0; background: none; appearance: none; padding: 0 4px; }
.combo input::placeholder { color: #999; }
.layer { width: 141px; }
.swatch { width: 20px; height: 20px; margin: 2px 2px 2px 4px; background: #a00a0a; border: 1px solid #8a0000; }

/* left palette */
.work { flex: 1; min-height: 0; display: flex; }
.palette { flex: none; width: 71px; padding: 7px 0 0 2px; border-left: 1px solid #ddd; border-right: 2px solid #d8d8d8; display: flex; flex-direction: column; align-items: stretch; }
.hgrip { flex: none; height: 5px; margin: 0 9px 5px 6px; border: solid #bdbdbd; border-width: 1px 0; }
.palette hr { flex: none; width: 66px; height: 2px; margin: 0; border: 0; border-top: 1px solid #bbb; }
.pgrid { flex: none; display: grid; grid-template-columns: 33px 33px; grid-auto-rows: 33px; margin-left: -2px; }
.pgrid button { display: grid; place-items: center; }
.pgrid svg { width: 24px; height: 24px; }
.pgrid .dd::after { right: 0; bottom: 2px; }
.rv { font: bold 9px "Liberation Sans", sans-serif; fill: #333; }
.dim2 { fill: #bbb; }
.more { margin: 22px 3px 0 0; }

/* design manager */
.panel { flex: none; width: 355px; border-right: 4px solid #d8d8d8; display: flex; flex-direction: column; }
.tab { color: #888; background: #d9d9d9; text-align: center; }
.tab.on { color: #0696d7; background: none; border-bottom: 3px solid #0696d7; }
.tabs { flex: none; height: 31px; display: flex; gap: 4px; padding-left: 1px; border-bottom: 1px solid #999; }
.tabs .tab { width: 68px; height: 29px; }
.tabs .tab.on { width: 102px; height: 31px; }
.subtabs { flex: none; display: flex; align-items: flex-start; gap: 4px; padding: 1px 4px 0 3px; }
.subtabs .tab { width: 53px; height: 30px; }
.subtabs .tab.on { width: 71px; }
.sq { width: 29px; height: 29px; display: grid; place-items: center; background: #ccc; border: 1px solid #c2c2c2; border-radius: 2px; }
.viewrow { flex: none; display: flex; align-items: center; padding: 12px 13px 9px 9px; border-bottom: 1px solid #d8d8d8; }
.viewrow label { width: 50px; font-weight: bold; }
.viewrow .combo { flex: 1; margin-right: 5px; }
.help { width: 17px; height: 17px; border: 1px solid #888; border-radius: 50%; font-size: 11px; line-height: 14px; font-weight: bold; color: #777; background: #f6f6f6; }
.groups { flex: 1; min-height: 0; display: flex; flex-direction: column; gap: 10px; padding: 6px 10px 1px 9px; }
.group { flex: 1; min-height: 0; display: flex; flex-direction: column; }
.ghead { display: flex; align-items: center; gap: 6px; margin-bottom: 4px; white-space: nowrap; }
.rule { flex: 1; height: 2px; background: #999; border-bottom: 1px solid #fff; }
.search { display: flex; align-items: center; margin-bottom: 7px; }
.search > button { width: 27px; height: 26px; }
.search > button:first-child { padding: 4px 0 0 4px; }
.search > button:first-child::after { right: 2px; bottom: 5px; border-width: 4px 3px 0; }
.search .combo { flex: 1; }
.search .dots { display: flex; gap: 3px; width: 17px; margin: 0 15px 0 23px; align-items: center; }
.dots i { width: 3px; height: 3px; border-radius: 50%; background: #555; }
.search .dots::after { right: -5px; bottom: -1px; }
.box { flex: 1; min-height: 0; display: flex; flex-direction: column; background: #fff; border: 1px solid #888; overflow: hidden; }
.list { width: 100%; border-collapse: separate; border-spacing: 0; table-layout: fixed; align-self: flex-start; }
.list th { height: 22px; padding: 3px 0 0; font-weight: normal; white-space: nowrap; overflow: hidden; background: linear-gradient(#fff 40%, #f3f4f6 40%); border: solid #ddd; border-width: 0 1px 1px 0; }
.list th.sorted { position: relative; background: linear-gradient(#f2f9fd 40%, #dceef7 40%); border-color: #9ad8f2; }
.list th.sorted::before { content: ""; position: absolute; left: 50%; top: 2px; margin-left: -3px; border: solid transparent; border-width: 0 3px 3px; border-bottom-color: #3a7395; }
.list td { height: 16px; padding: 0 3px; line-height: 16px; white-space: nowrap; }
.list tr:nth-child(2) td { background: #f4f4f4; }
.list tr.sel td { background: #0696d7; color: #fff; }
.list .num { text-align: right; padding-right: 4px; }
.num input { appearance: none; display: block; width: 12px; height: 12px; margin: 0 0 0 auto; background: #fff; border: 1px solid #bbb; border-radius: 2px; }
.list .num:last-child { padding-right: 0; }
.c41 { width: 41px; } .c84 { width: 84px; } .c90 { width: 91px; } .c34 { width: 34px; } .c33 { width: 33px; } .c100 { width: 100px; }
.scrollrow { flex: 1; min-height: 0; display: flex; }
.vbar { flex: none; width: 16px; background: #f4f4f4; padding-left: 5px; }
.vbar i { display: block; width: 6px; height: 30px; border-radius: 3px; background: #808080; }
.hbar { flex: none; height: 16px; background: #f4f4f4; padding-top: 5px; }
.hbar i { display: block; width: 41%; height: 6px; border-radius: 3px; background: #808080; }
.hbar.wide { margin-right: 16px; }
.hbar.wide i { width: 69%; }

/* board editor */
.editor { flex: 1; min-width: 0; display: flex; flex-direction: column; }
.cmd { flex: none; padding: 4px 4px 4px 34px; }
.cmd .combo { border-color: #0696d7; }
.stage { flex: 1; min-height: 0; display: grid; grid-template: 1fr 17px / 1fr 16px; }
.canvas { position: relative; min-height: 0; background: #282828; overflow: hidden; }
.board { display: block; width: 100%; height: 100%; }
.cscroll-v { padding-left: 5px; }
.cscroll-v i { display: block; width: 6px; height: 100%; border-radius: 3px; background: #808080; }
.cscroll-h { padding-top: 6px; }
.cscroll-h i { display: block; height: 6px; border-radius: 3px; background: #808080; }
.trace { fill: none; stroke: #a00a0a; stroke-width: 4; stroke-linecap: round; stroke-linejoin: round; }
.thin { stroke-width: 3; }
.pads { fill: #c92b2b; stroke: #b0a0a0; stroke-width: 1; }
.pad-hatch { fill: url(#hatch); }
.silk { font: 12px "Liberation Sans", sans-serif; fill: #a8a8a8; }
.hello { font: 16px "Liberation Sans", sans-serif; fill: #a00a0a; }
.sidetabs { position: absolute; top: 9px; right: 3px; bottom: 37px; width: 27px; display: grid; grid-auto-rows: 1fr; gap: 15px; }
.sidetabs button { display: flex; flex-direction: column; align-items: center; gap: 10px; padding-top: 19px; background: #444; color: #fff; }
.sidetabs button:first-child { padding-top: 8px; gap: 7px; }
.sidetabs span { writing-mode: vertical-rl; font: bold 11px/16px "DejaVu Sans Condensed", sans-serif; white-space: nowrap; }

.status { flex: none; height: 25px; display: flex; align-items: center; justify-content: space-between; padding: 0 26px 0 6px; border-top: 1px solid #808080; }

/* taskbar */
.taskbar {
  flex: none; height: 40px; display: flex; align-items: center; border-top: 1px solid #0f2f52;
  box-shadow: inset 0 1px #8fc1e6;
  background:
    radial-gradient(circle 120px at 0 120px, transparent 92%, #8fc2f4 95%, #8fc2f4 97%, transparent 100%) 880px 0 / 130px 40px no-repeat,
    linear-gradient(90deg, #2569a0, #1f6fae 4%, #2c8fca 10%, #3a9fd4 20%, #3899d2 34%, #2f86c8 52%, #2272bd 62%, #1d63ae 74%, #16487f 78%, #143a68 90%, #173a66);
}
.orb { width: 38px; height: 38px; margin: 0 28px 0 8px; }
.pin { width: 28px; height: 32px; display: grid; place-items: center; margin-right: 33px; }
.pin + .pin { width: 32px; margin-right: 31px; }
.pin + .pin + .pin { margin-right: 16px; }
.app { flex: none; width: 60px; height: 38px; margin-right: 2px; display: grid; place-items: center; border: 1px solid #16466f; border-radius: 3px; box-shadow: inset 0 0 0 1px #9fd0ee; background: linear-gradient(145deg, #a9d3ee, #6bb0dc 45%, #3e93cd 46%, #58abdc); }
.app.stack { width: 52px; margin-right: 10px; box-shadow: inset 0 0 0 1px #9fd0ee, 3px 0 #5a9fca, 4px 0 #16466f, 7px 0 #5a9fca, 8px 0 #16466f; }
.app.active { background: linear-gradient(145deg, #fdf0b8, #efcf6a 60%, #f8e190); }
.wordw { font: italic bold 11px "Liberation Sans", sans-serif; fill: #2b51a8; }
.sk { font: bold 20px "Liberation Sans", sans-serif; fill: #fff; }
.skn { font: 12px "Liberation Sans", sans-serif; fill: #fff; }
.tray { align-self: stretch; display: flex; align-items: center; color: #fff; font: 12px/16px "DejaVu Sans Condensed", sans-serif; }
.lang { margin-right: 6px; }
.gap8 { margin-left: 8px; }
.gap12 { margin-left: 12px; }
.tq { font: bold 11px "Liberation Sans", sans-serif; fill: #fff; }
.clock { display: flex; flex-direction: column; align-items: center; margin: 0 10px 0 14px; font: 12px/16px "Liberation Sans", sans-serif; }
.peek { width: 16px; align-self: stretch; border: 1px solid #0e2a4a; background: linear-gradient(135deg, #8ba5c0, #2d4d74 60%); }
```
